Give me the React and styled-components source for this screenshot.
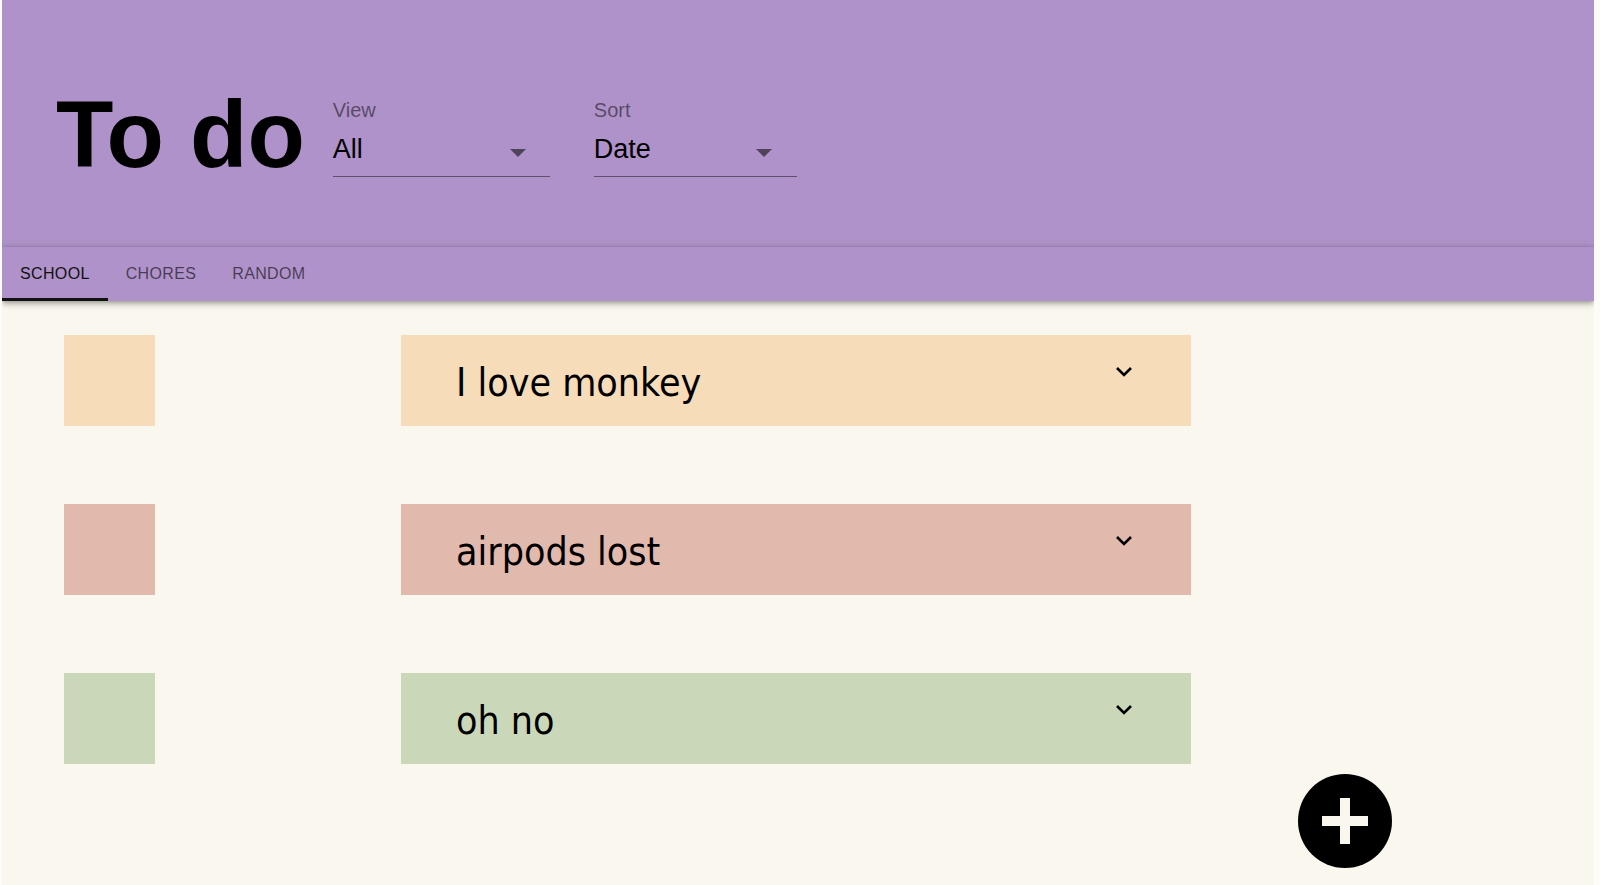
import React from 'react';
import styled, { createGlobalStyle } from 'styled-components';

const GlobalStyle = createGlobalStyle`
  html, body {
    margin: 0;
    padding: 0;
    background: #fdfcf9;
  }
  body {
    font-family: "Liberation Sans", Arial, sans-serif;
  }
`;

const Page = styled.div`
  position: relative;
  min-height: 885px;
  margin: 0 6px 0 2px;
  background: #faf7ee;
  overflow: hidden;
`;

const Header = styled.header`
  display: flex;
  align-items: flex-start;
  height: 247px;
  padding-left: 54px;
  background: #af92c9;
  box-sizing: border-box;
`;

const Title = styled.h1`
  margin: 88px 28px 0 0;
  font-family: "Liberation Sans", Arial, sans-serif;
  font-size: 94px;
  font-weight: 700;
  line-height: 1;
  color: #000;
`;

const Control = styled.div`
  display: flex;
  flex-direction: column;
  width: ${(p) => p.width}px;
  margin: 100px ${(p) => p.gap || 0}px 0 0;
`;

const Label = styled.label`
  font-size: 20px;
  line-height: 1;
  color: rgba(0, 0, 0, 0.5);
`;

const SelectRow = styled.div`
  display: flex;
  align-items: center;
  justify-content: space-between;
  margin-top: 13px;
  padding-bottom: 11px;
  line-height: 32px;
  height: 32px;
  font-size: 27px;
  color: #000;
  border-bottom: 1px solid rgba(0, 0, 0, 0.45);
`;

const Caret = styled.span`
  width: 0;
  height: 0;
  margin: 8px ${(p) => p.offset}px 0 0;
  border-left: 8px solid transparent;
  border-right: 8px solid transparent;
  border-top: 8px solid rgba(0, 0, 0, 0.55);
`;

const TabBar = styled.nav`
  position: relative;
  z-index: 1;
  display: flex;
  height: 54px;
  background: #af92c9;
  box-shadow: 0 -1px 3px rgba(0, 0, 0, 0.08), 0 2px 4px -1px rgba(0, 0, 0, 0.2),
    0 4px 5px 0 rgba(0, 0, 0, 0.14), 0 1px 10px 0 rgba(0, 0, 0, 0.12);
`;

const Tab = styled.button`
  position: relative;
  padding: 0 18px;
  border: 0;
  background: transparent;
  font-family: "Liberation Sans", Arial, sans-serif;
  font-size: 16px;
  letter-spacing: 0.35px;
  text-transform: uppercase;
  color: ${(p) => (p.active ? '#111' : 'rgba(0, 0, 0, 0.6)')};
  cursor: pointer;

  &::after {
    content: '';
    position: absolute;
    left: 0;
    right: 0;
    bottom: 0;
    height: 3px;
    background: ${(p) => (p.active ? '#111' : 'transparent')};
  }
`;

const List = styled.main`
  display: flex;
  flex-direction: column;
  gap: 78px;
  padding: 34px 0 0 62px;
`;

const Row = styled.div`
  display: flex;
  align-items: stretch;
  height: 91px;
`;

const Swatch = styled.div`
  width: 91px;
  background: ${(p) => p.color};
`;

const Card = styled.div`
  display: flex;
  align-items: center;
  justify-content: space-between;
  width: 790px;
  margin-left: 246px;
  background: ${(p) => p.color};
  box-sizing: border-box;
  padding: 0 58px 0 55px;
`;

const CardText = styled.span`
  font-family: "DejaVu Sans", Verdana, sans-serif;
  font-stretch: condensed;
  font-size: 39px;
  line-height: 1;
  margin-top: 4px;
  color: #000;
`;

const Chevron = styled.svg`
  align-self: flex-start;
  margin-top: 31px;
  width: 18px;
  height: 12px;
`;

const Fab = styled.button`
  position: absolute;
  right: 202px;
  bottom: 17px;
  width: 94px;
  height: 94px;
  border: 0;
  border-radius: 50%;
  background: #000;
  display: flex;
  align-items: center;
  justify-content: center;
  cursor: pointer;
`;

const todos = [
  { text: 'I love monkey', color: '#f6dcb9' },
  { text: 'airpods lost', color: '#e2b9ad' },
  { text: 'oh no', color: '#cad8b9' },
];

export default function App() {
  return (
    <>
      <GlobalStyle />
      <Page>
        <Header>
          <Title>To do</Title>
          <Control width={217} gap={44}>
            <Label>View</Label>
            <SelectRow>
              All
              <Caret offset={24} />
            </SelectRow>
          </Control>
          <Control width={203}>
            <Label>Sort</Label>
            <SelectRow>
              Date
              <Caret offset={25} />
            </SelectRow>
          </Control>
        </Header>
        <TabBar>
          <Tab active>School</Tab>
          <Tab>Chores</Tab>
          <Tab>Random</Tab>
        </TabBar>
        <List>
          {todos.map((t) => (
            <Row key={t.text}>
              <Swatch color={t.color} />
              <Card color={t.color}>
                <CardText>{t.text}</CardText>
                <Chevron viewBox="0 0 18 12">
                  <polyline points="2,2 9,9 16,2" fill="none" stroke="#000" strokeWidth="2.6" />
                </Chevron>
              </Card>
            </Row>
          ))}
        </List>
        <Fab aria-label="add">
          <svg width="48" height="48" viewBox="0 0 48 48">
            <rect x="19" y="1" width="10" height="46" fill="#faf7ee" />
            <rect x="1" y="19" width="46" height="10" fill="#faf7ee" />
          </svg>
        </Fab>
      </Page>
    </>
  );
}
